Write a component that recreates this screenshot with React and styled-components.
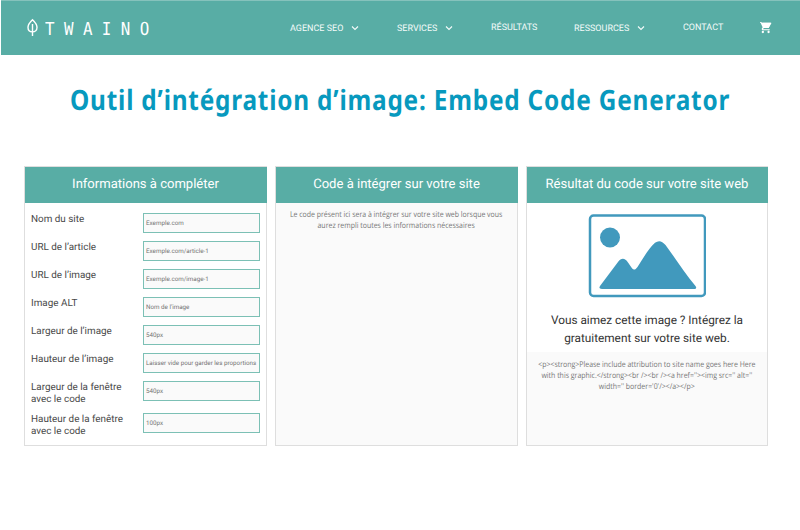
import React from "react";
import styled, { createGlobalStyle } from "styled-components";

const GlobalStyle = createGlobalStyle`
  *, *::before, *::after { box-sizing: border-box; }
  body {
    margin: 0;
    background: #fff;
    font-family: Roboto, "Liberation Sans", sans-serif;
    text-rendering: geometricPrecision;
    overflow: hidden;
  }
`;

const Page = styled.div`
  width: 800px;
  height: 530px;
`;

const Header = styled.header`
  display: flex;
  align-items: center;
  height: 55px;
  margin-left: 1px;
  padding: 0 28px 1px 25px;
  background: #58ada5;
  border-top: 1px solid #85c2bc;
  color: #fff;
`;

const Logo = styled.a`
  display: flex;
  align-items: center;
  gap: 7px;
  margin-right: auto;
  color: #fff;
`;

const LogoText = styled.span`
  font-family: "DejaVu Sans Mono", monospace;
  font-size: 18px;
  line-height: 20px;
  white-space: nowrap;
  width: 110px;
  padding-top: 4px;
  transform: scaleX(0.88);
  transform-origin: 0 50%;
  letter-spacing: 10.7px;
`;

const Nav = styled.nav`
  display: flex;
  align-items: center;
`;

const NavItem = styled.a`
  display: flex;
  align-items: center;
  justify-content: space-between;
  width: ${(p) => p.$width}px;
  margin-right: ${(p) => p.$gap}px;
  padding-top: ${(p) => p.$drop}px;
  font-size: 9px;
  line-height: 12px;
  white-space: nowrap;
  color: #f4fbfa;
`;

const Title = styled.h1`
  width: 660px;
  margin: 27px 0 0 70px;
  font-family: "Noto Sans", sans-serif;
  font-size: 28px;
  font-weight: 700;
  line-height: 36px;
  white-space: nowrap;
  color: #0799be;
`;

const TitleText = styled.span`
  display: inline-block;
  transform: scaleX(0.87);
  transform-origin: 0 50%;
  letter-spacing: 0.92px;
`;

const Columns = styled.main`
  display: grid;
  grid-template-columns: 243px 243px 242px;
  column-gap: 8px;
  margin: 48px 0 0 24px;
  height: 280px;
`;

const Panel = styled.section`
  display: flex;
  flex-direction: column;
  border: 1px solid #dedede;
  background: ${(p) => (p.$muted ? "#fafafa" : "#fff")};
`;

const PanelTitle = styled.h2`
  flex: none;
  height: 36px;
  margin: 0 -1px 0 0;
  padding-right: 1px;
  background: #58ada5;
  color: #fff;
  font-size: 13.05px;
  font-weight: 400;
  line-height: 36px;
  text-align: center;
  white-space: nowrap;
`;

const Form = styled.form`
  display: flex;
  flex-direction: column;
  padding: 10px 6px 0;
`;

const Row = styled.label`
  display: flex;
  justify-content: space-between;
  height: ${(p) => (p.$tall ? 32 : 28)}px;
`;

const Label = styled.span`
  width: 105px;
  padding-top: 1px;
  font-size: 9.9px;
  line-height: 12px;
  color: #484848;
  white-space: pre-line;
`;

const Field = styled.input`
  width: 117px;
  height: 20px;
  padding: 0 0 0 2px;
  border: 1px solid #7cc0b5;
  border-radius: 0;
  background: #fafafa;
  font-family: Roboto, sans-serif;
  font-size: 6.25px;
  text-rendering: geometricPrecision;
  outline: none;
  &::placeholder { color: #757575; opacity: 1; }
`;

const CodeBlock = styled.div`
  display: flex;
  justify-content: center;
  min-width: 0;
  padding-top: ${(p) => p.$top}px;
`;

const CodeText = styled.p`
  flex: none;
  margin: 0;
  font-family: "Open Sans", sans-serif;
  font-size: 8px;
  line-height: 11px;
  text-align: center;
  white-space: pre;
  transform: scaleX(0.87);
  color: #777;
`;

const Preview = styled.div`
  display: flex;
  flex-direction: column;
  align-items: center;
  height: 149px;
  padding-top: 11px;
`;

const Caption = styled.p`
  margin: 14px 0 0;
  font-size: 11.8px;
  line-height: 17.5px;
  text-align: center;
  white-space: pre;
  color: #333;
`;

const CodeArea = styled.div`
  flex: 1;
  background: #fafafa;
`;

const Chevron = () => (
  <svg width="8" height="6" viewBox="0 0 8 6" fill="none" stroke="currentColor" strokeWidth="1.1">
    <path d="M1 0.500L4 3.500L7 0.500" />
  </svg>
);

const Leaf = () => (
  <svg width="12" height="19" viewBox="0 0 12 19" fill="none" stroke="currentColor" strokeWidth="1.4">
    <path d="M6.500 1.700C4.300 3.700 2 6.500 2 9.600C2 12.500 3.900 13.900 6.500 13.900C9.100 13.900 11 12.500 11 9.600C11 6.500 8.700 3.700 6.500 1.700ZM6.500 6V18" />
  </svg>
);

const Cart = () => (
  <svg width="12" height="12" viewBox="2 3 21 20" fill="currentColor">
    <path d="M7 18c-1.1 0-2 .9-2 2s.9 2 2 2 2-.9 2-2-.9-2-2-2zM1 2v2h2l3.6 7.600-1.400 2.400C4.500 15.400 5.500 17 7 17h12v-2H7.400l1.100-2h7.500c.7 0 1.400-.4 1.700-1L21.700 5c.3-.5 0-1-.7-1H5.200l-.9-2H1zm16 16c-1.100 0-2 .9-2 2s.9 2 2 2 2-.9 2-2-.9-2-2-2z" />
    <path d="M6 4H21L17 13H9Z" />
  </svg>
);

const Picture = () => (
  <svg width="118" height="84" viewBox="0 0 118 84">
    <rect x="2" y="1.500" width="115" height="80.500" rx="3.500" fill="#fff" stroke="#4199bd" strokeWidth="2.500" />
    <circle cx="22" cy="23.500" r="10" fill="#4199bd" />
    <path d="M12 72L30 48C33.500 43.300 37 44 40 48.500L44 54.200C45.700 56.600 47.500 55.700 49.500 53C55 44.500 60.500 34.500 67 28.800C70.500 26.100 74 26.800 77.500 31C87.500 44.500 97 59.500 107.500 72C109 74.300 108 75 106 75H14C11.500 75 10.800 74 12 72Z" fill="#4199bd" />
  </svg>
);

const navItems = [
  { text: "AGENCE SEO", width: 69, gap: 38, menu: true },
  { text: "SERVICES", width: 56, gap: 38, menu: true },
  { text: "RÉSULTATS", width: 47, gap: 36 },
  { text: "RESSOURCES", width: 71, gap: 38, menu: true },
  { text: "CONTACT", width: 41, gap: 36 },
];

const fields = [
  ["Nom du site", "Exemple.com"],
  ["URL de l’article", "Exemple.com/article-1"],
  ["URL de l’image", "Exemple.com/image-1"],
  ["Image ALT", "Nom de l’image"],
  ["Largeur de l’image", "540px"],
  ["Hauteur de l’image", "Laisser vide pour garder les proportions"],
  ["Largeur de la fenêtre\navec le code", "540px"],
  ["Hauteur de la fenêtre\navec le code", "100px"],
];

export default function App() {
  return (
    <Page>
      <GlobalStyle />
      <Header>
        <Logo>
          <Leaf />
          <LogoText>TWAINO</LogoText>
        </Logo>
        <Nav>
          {navItems.map((item) => (
            <NavItem key={item.text} $width={item.width} $gap={item.gap} $drop={item.menu ? 2 : 1}>
              {item.text}
              {item.menu && <Chevron />}
            </NavItem>
          ))}
          <Cart />
        </Nav>
      </Header>
      <Title>
        <TitleText>Outil d’intégration d’image: Embed Code Generator</TitleText>
      </Title>
      <Columns>
        <Panel>
          <PanelTitle>Informations à compléter</PanelTitle>
          <Form>
            {fields.map(([label, placeholder]) => (
              <Row key={label} $tall={label.includes("\n")}>
                <Label>{label}</Label>
                <Field placeholder={placeholder} />
              </Row>
            ))}
          </Form>
        </Panel>
        <Panel $muted>
          <PanelTitle>Code à intégrer sur votre site</PanelTitle>
          <CodeBlock $top={6}>
            <CodeText>
              {"Le code présent ici sera à intégrer sur votre site web lorsque vous\naurez rempli toutes les informations nécessaires"}
            </CodeText>
          </CodeBlock>
        </Panel>
        <Panel>
          <PanelTitle>Résultat du code sur votre site web</PanelTitle>
          <Preview>
            <Picture />
            <Caption>{"Vous aimez cette image ? Intégrez la\ngratuitement sur votre site web."}</Caption>
          </Preview>
          <CodeArea>
            <CodeBlock $top={7}>
              <CodeText>
                {"<p><strong>Please include attribution to site name goes here Here\nwith this graphic.</strong><br /><br /><a href=''><img src='' alt=''\nwidth='' border='0'/></a></p>"}
              </CodeText>
            </CodeBlock>
          </CodeArea>
        </Panel>
      </Columns>
    </Page>
  );
}
